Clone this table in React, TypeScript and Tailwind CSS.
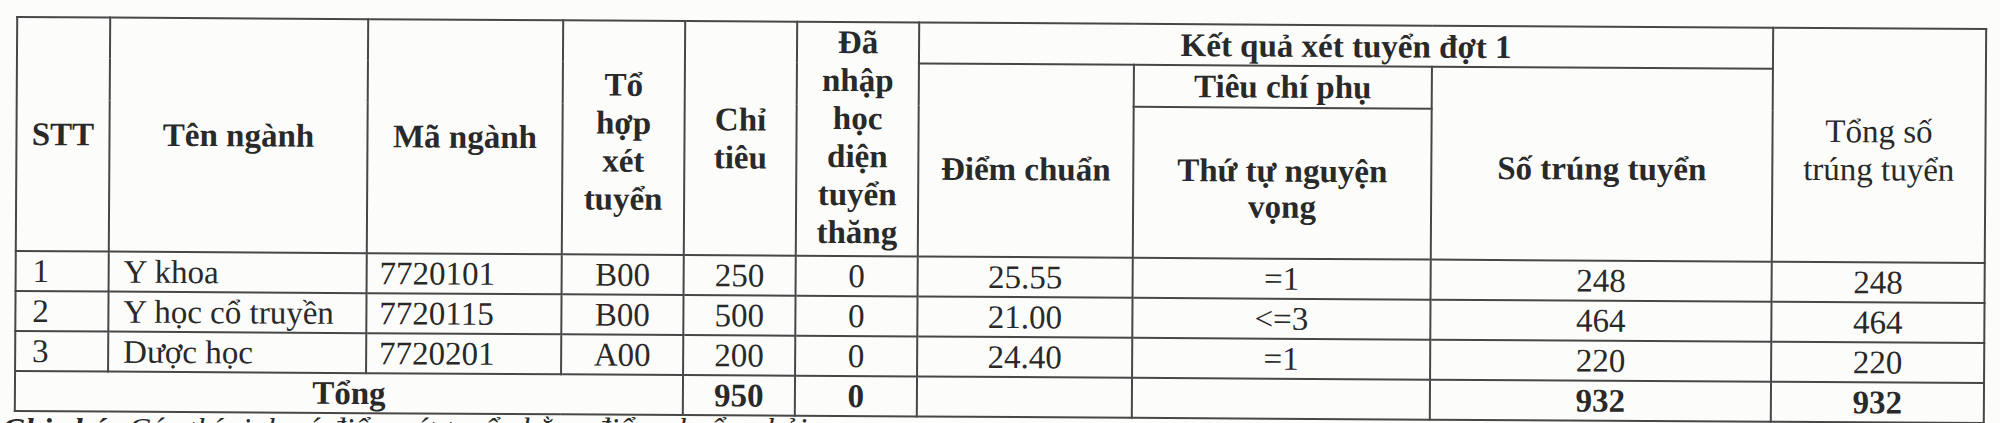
const rows = [
  { stt: "1", name: "Y khoa", code: "7720101", combo: "B00", quota: "250", direct: "0", score: "25.55", order: "=1", admitted: "248", total: "248" },
  { stt: "2", name: "Y học cổ truyền", code: "7720115", combo: "B00", quota: "500", direct: "0", score: "21.00", order: "<=3", admitted: "464", total: "464" },
  { stt: "3", name: "Dược học", code: "7720201", combo: "A00", quota: "200", direct: "0", score: "24.40", order: "=1", admitted: "220", total: "220" },
]

const cell = "border-2 border-[#474747] p-0 align-middle"

export default function App() {
  return (
    <div className="h-[423px] w-[2000px] overflow-hidden bg-[#fcfcfb] text-[#292929] [font-family:Liberation_Serif,Times_New_Roman,serif]">
      <div className="pl-[15px] pt-[22px]">
        <table className="w-[1969px] table-fixed border-collapse rotate-[0.35deg] text-[33px] leading-[38px] [font-family:Liberation_Serif,Times_New_Roman,serif]">
          <colgroup>
            <col className="w-[93px]" />
            <col className="w-[258px]" />
            <col className="w-[195px]" />
            <col className="w-[122px]" />
            <col className="w-[112px]" />
            <col className="w-[122px]" />
            <col className="w-[215px]" />
            <col className="w-[298px]" />
            <col className="w-[341px]" />
            <col className="w-[213px]" />
          </colgroup>
          <thead className="font-bold text-center">
            <tr className="h-[41px]">
              <th rowSpan={3} className={cell}>STT</th>
              <th rowSpan={3} className={cell}>Tên ngành</th>
              <th rowSpan={3} className={cell}>Mã ngành</th>
              <th rowSpan={3} className={`${cell} pt-[8px]`}>
                Tổ<br />hợp<br />xét<br />tuyển
              </th>
              <th rowSpan={3} className={cell}>
                Chỉ<br />tiêu
              </th>
              <th rowSpan={3} className={`${cell} pb-[4px] leading-[38px]`}>
                Đã<br />nhập<br />học<br />diện<br />tuyển<br />thăng
              </th>
              <th colSpan={3} className={cell}>Kết quả xét tuyển đợt 1</th>
              <th rowSpan={3} className={`${cell} pt-[10px] font-normal`}>
                Tổng số<br />trúng tuyển
              </th>
            </tr>
            <tr className="h-[41px]">
              <th rowSpan={2} className={`${cell} pt-[16px]`}>Điểm chuẩn</th>
              <th className={cell}>Tiêu chí phụ</th>
              <th rowSpan={2} className={`${cell} pt-[8px]`}>Số trúng tuyển</th>
            </tr>
            <tr className="h-[151px]">
              <th className={`${cell} pt-[10px] leading-[36px]`}>
                Thứ tự nguyện<br />vọng
              </th>
            </tr>
          </thead>
          <tbody>
            {rows.map((r) => (
              <tr key={r.stt} className="h-[40px]">
                <td className={`${cell} pl-[16px]`}>{r.stt}</td>
                <td className={`${cell} pl-[14px]`}>{r.name}</td>
                <td className={`${cell} pl-[12px]`}>{r.code}</td>
                <td className={`${cell} text-center`}>{r.combo}</td>
                <td className={`${cell} text-center`}>{r.quota}</td>
                <td className={`${cell} text-center`}>{r.direct}</td>
                <td className={`${cell} text-center`}>{r.score}</td>
                <td className={`${cell} text-center`}>{r.order}</td>
                <td className={`${cell} text-center`}>{r.admitted}</td>
                <td className={`${cell} text-center`}>{r.total}</td>
              </tr>
            ))}
            <tr className="h-[40px] font-bold">
              <td colSpan={4} className={`${cell} text-center`}>Tổng</td>
              <td className={`${cell} text-center`}>950</td>
              <td className={`${cell} text-center`}>0</td>
              <td className={cell}></td>
              <td className={cell}></td>
              <td className={`${cell} text-center`}>932</td>
              <td className={`${cell} text-center`}>932</td>
            </tr>
          </tbody>
        </table>
      </div>
      <p className="-mt-[8px] pl-[2px] text-[32px] leading-[38px] italic">
        <span className="font-bold">Ghi chú:</span> Các thí sinh có điểm xét tuyển bằng điểm chuẩn phải
      </p>
    </div>
  )
}
